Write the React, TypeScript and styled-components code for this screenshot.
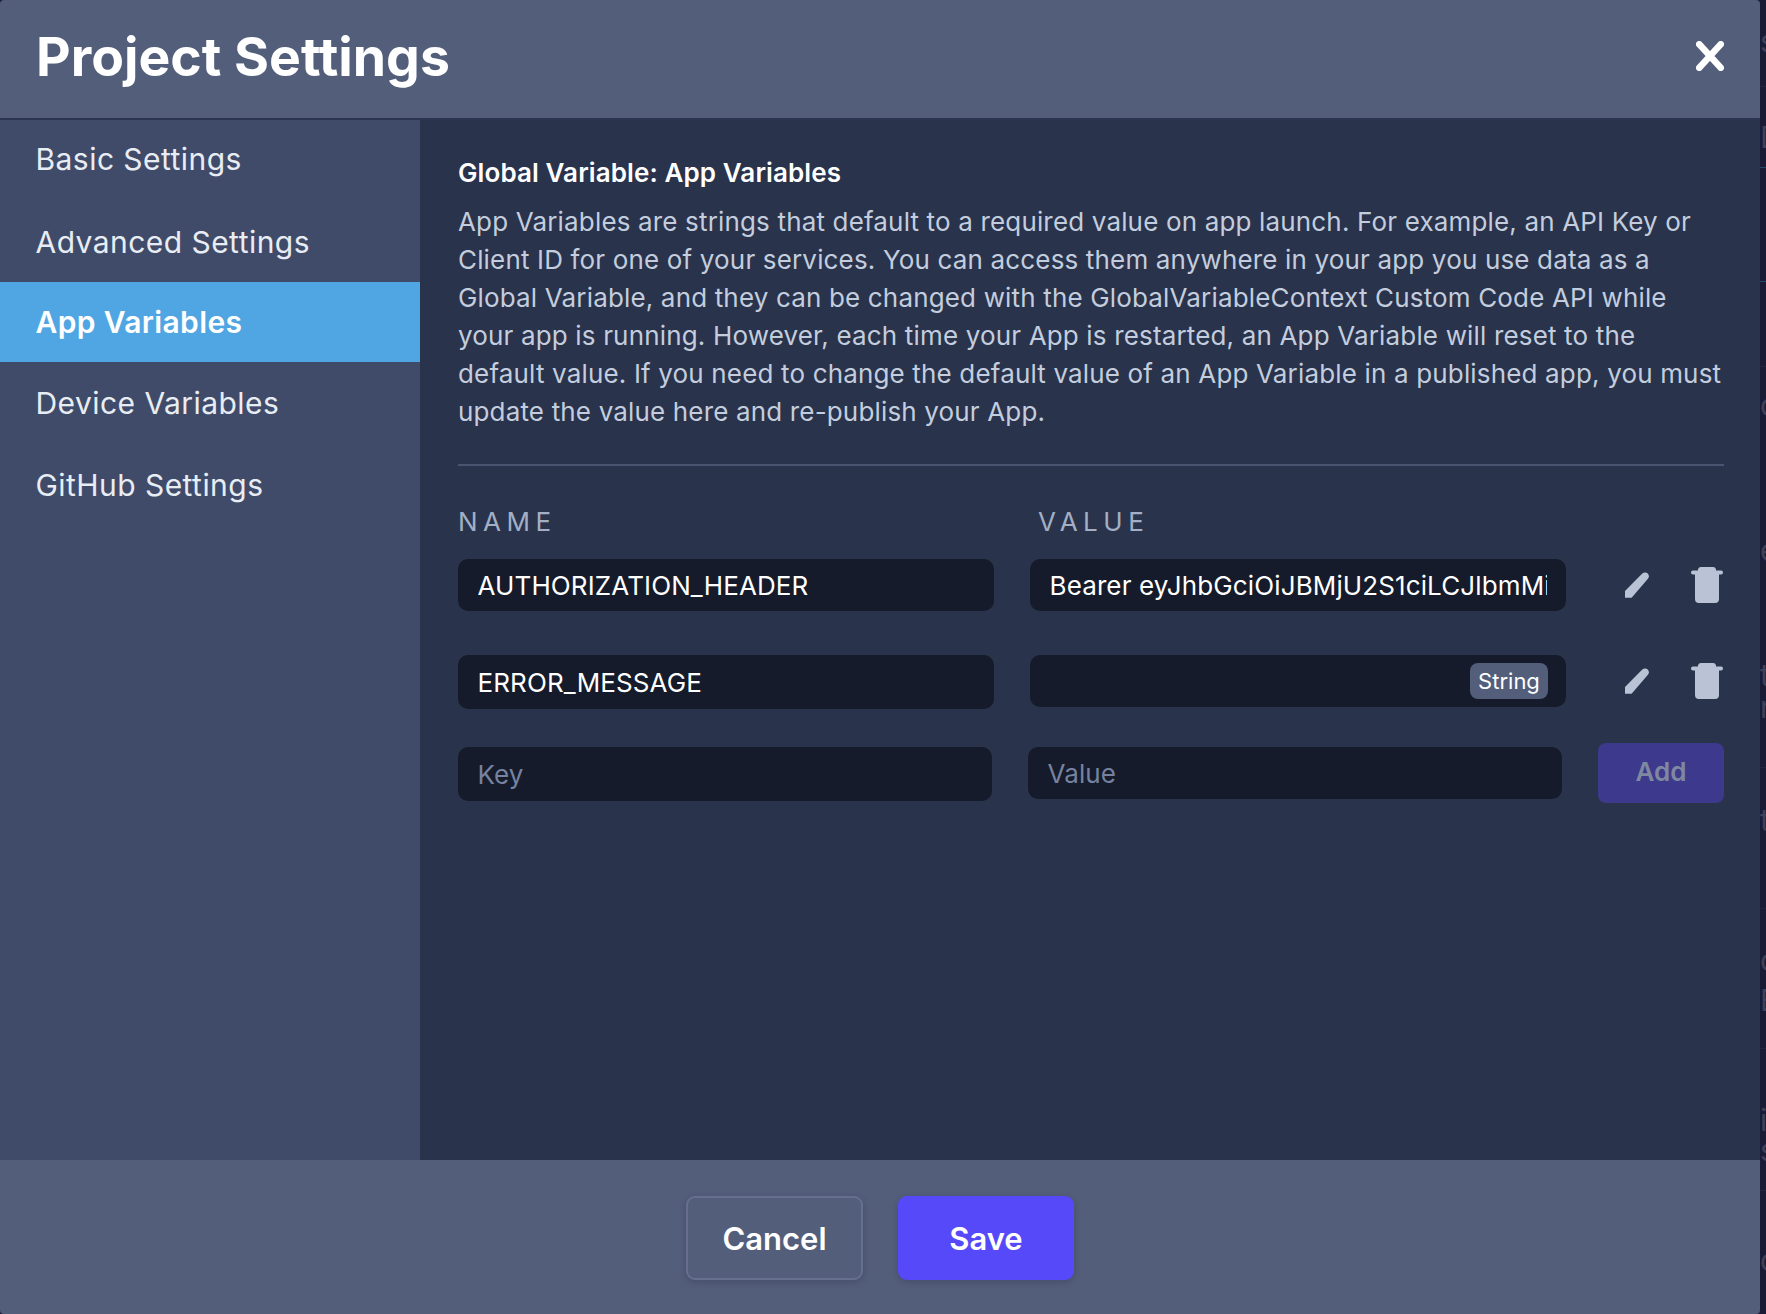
import styled, { createGlobalStyle } from 'styled-components';

const COLORS = {
  BACKDROP: '#1a1b35',
  HEADER: '#535e7b',
  SIDEBAR: '#404b69',
  MAIN: '#29334c',
  ACTIVE: '#4fa6e2',
  FIELD: '#151b2a',
  BODY_TEXT: '#c3cddd',
  MUTED: '#a3afc4',
  ICON: '#b9c3d5',
};

const GlobalStyle = createGlobalStyle`
  html, body {
    margin: 0;
    height: 100%;
    background: ${COLORS.BACKDROP};
    font-family: Inter, "Noto Sans", sans-serif;
    overflow: hidden;
  }
  * {
    box-sizing: border-box;
  }
`;

const Page = styled.div`
  position: relative;
  height: 1314px;
  width: 1766px;
  overflow: hidden;
`;

const Backdrop = styled.div`
  position: absolute;
  top: 0;
  bottom: 0;
  left: 1760px;
  width: 6px;
  overflow: hidden;
`;

const BackdropGlyph = styled.span<{ $y: number }>`
  position: absolute;
  left: 0;
  top: ${(p) => p.$y}px;
  font-size: 30px;
  line-height: 30px;
  color: #3f4158;
`;

const BackdropLine = styled.div<{ $y: number; $color: string }>`
  position: absolute;
  left: 0;
  right: 0;
  top: ${(p) => p.$y}px;
  height: 1px;
  background: ${(p) => p.$color};
`;

const Modal = styled.div`
  width: 1760px;
  height: 1314px;
  display: flex;
  flex-direction: column;
  border-radius: 4px;
  overflow: hidden;
`;

const Header = styled.header`
  height: 120px;
  flex-shrink: 0;
  display: flex;
  align-items: center;
  justify-content: space-between;
  padding: 0 36px 6px;
  background: ${COLORS.HEADER};
  border-bottom: 2px solid #2c3550;
`;

const Title = styled.h1`
  margin: 0;
  font-size: 53.5px;
  font-weight: 700;
  color: #fff;
`;

const Body = styled.div`
  flex: 1;
  display: flex;
  min-height: 0;
`;

const Sidebar = styled.nav`
  width: 420px;
  flex-shrink: 0;
  background: ${COLORS.SIDEBAR};
  display: flex;
  flex-direction: column;
`;

const NavItem = styled.div<{ $active?: boolean; $height: number }>`
  height: ${(p) => p.$height}px;
  display: flex;
  align-items: center;
  padding-left: 35.5px;
  font-size: 30px;
  letter-spacing: ${(p) => (p.$active ? 0.35 : 0.45)}px;
  font-weight: ${(p) => (p.$active ? 600 : 400)};
  color: ${(p) => (p.$active ? '#fff' : '#e8edf4')};
  background: ${(p) => (p.$active ? COLORS.ACTIVE : 'transparent')};

  &:first-child {
    padding-bottom: 3px;
  }
`;

const Main = styled.main`
  flex: 1;
  background: ${COLORS.MAIN};
  padding: 34px 36px 0 38px;
`;

const Heading = styled.div`
  font-size: 26px;
  line-height: 38px;
  font-weight: 600;
  letter-spacing: 0.1px;
  color: #fff;
`;

const Description = styled.p`
  margin: 11px 0 0;
  font-size: 26px;
  line-height: 38px;
  color: ${COLORS.BODY_TEXT};
  letter-spacing: 0.16px;
`;

const Divider = styled.hr`
  margin: 33px 0 0;
  border: 0;
  height: 2px;
  background: #4a5471;
`;

const ColumnLabels = styled.div`
  display: flex;
  margin-top: 35px;
  height: 40px;
  align-items: center;
`;

const ColumnLabel = styled.div<{ $width: number }>`
  width: ${(p) => p.$width}px;
  font-size: 26px;
  letter-spacing: 5.5px;
  color: ${COLORS.MUTED};
`;

const Row = styled.div<{ $top: number }>`
  display: flex;
  align-items: flex-start;
  margin-top: ${(p) => p.$top}px;
`;

const Field = styled.input<{ $width: number; $height: number; $offset?: number; $gap?: number }>`
  display: block;
  width: ${(p) => p.$width}px;
  height: ${(p) => p.$height}px;
  margin-top: ${(p) => p.$offset ?? 0}px;
  margin-right: ${(p) => p.$gap ?? 0}px;
  padding: 0 19.5px;
  border: 0;
  border-radius: 10px;
  outline: none;
  background: ${COLORS.FIELD};
  color: #fff;
  font-family: inherit;
  font-size: 26px;
  letter-spacing: 0.12px;
  flex-shrink: 0;

  &::placeholder {
    color: #76829f;
    opacity: 1;
  }
`;

const FieldWrap = styled.div`
  position: relative;
  flex-shrink: 0;
`;

const Badge = styled.span`
  position: absolute;
  top: 8px;
  right: 18px;
  height: 36px;
  width: 78px;
  display: flex;
  align-items: center;
  justify-content: center;
  border-radius: 8px;
  background: ${COLORS.HEADER};
  color: #fff;
  font-size: 22px;
`;

const Actions = styled.div`
  height: 52px;
  display: flex;
  align-items: center;
  margin-left: 59px;
  gap: 42px;
`;

const IconButton = styled.button`
  padding: 0;
  border: 0;
  background: none;
  display: flex;
`;

const AddButton = styled.button`
  width: 126px;
  height: 60px;
  padding: 0 0 3px;
  border: 0;
  border-radius: 8px;
  background: #3d398c;
  color: #7f88a1;
  font-family: inherit;
  font-size: 26px;
  font-weight: 600;
`;

const Footer = styled.footer`
  height: 154px;
  flex-shrink: 0;
  display: flex;
  justify-content: center;
  align-items: flex-start;
  gap: 35px;
  padding-top: 36px;
  background: ${COLORS.HEADER};
`;

const FooterButton = styled.button<{ $primary?: boolean }>`
  width: ${(p) => (p.$primary ? 176 : 177)}px;
  height: 84px;
  border-radius: 9px;
  border: ${(p) => (p.$primary ? '0' : '2px solid #666f8e')};
  background: ${(p) => (p.$primary ? '#5649fa' : 'transparent')};
  box-shadow: 0 2px 6px rgba(30, 36, 60, 0.25);
  color: #fff;
  font-family: inherit;
  font-size: 31px;
  font-weight: 600;
`;

const CloseIcon = () => (
  <svg width="28" height="30" viewBox="0 0 28 30" fill="none">
    <path d="M3.25 3.25 24.75 26.75M24.75 3.25 3.25 26.75" stroke="#fff" strokeWidth="6.5" strokeLinecap="round" />
  </svg>
);

const PencilIcon = () => (
  <svg width="24" height="26" viewBox="0 0 24.3 25.7">
    <path
      d="M0 19 17.5 1.2Q19 0 21 .2 24 1 24.2 4 24.2 5.2 23.2 6.5L6.7 25.7H0Z"
      fill={COLORS.ICON}
    />
  </svg>
);

const TrashIcon = () => (
  <svg width="32" height="36" viewBox="0 0 32 36">
    <path
      d="M10 0h12a3 3 0 0 1 3 3.5h5a2 2 0 0 1 0 4H28V32a4 4 0 0 1-4 4H8a4 4 0 0 1-4-4V7.5H2a2 2 0 0 1 0-4h5A3 3 0 0 1 10 0z"
      fill={COLORS.ICON}
    />
  </svg>
);

const NAV_ITEMS = [
  { title: 'Basic Settings', height: 81 },
  { title: 'Advanced Settings', height: 81 },
  { title: 'App Variables', height: 80, active: true },
  { title: 'Device Variables', height: 82 },
  { title: 'GitHub Settings', height: 82 },
];

const BACKDROP_GLYPHS = [
  { y: 26, ch: 's' },
  { y: 122, ch: 'D' },
  { y: 390, ch: 'o' },
  { y: 535, ch: 'e' },
  { y: 660, ch: 't' },
  { y: 692, ch: 'n' },
  { y: 805, ch: 't' },
  { y: 945, ch: 'o' },
  { y: 985, ch: 'E' },
  { y: 1105, ch: 'i' },
  { y: 1135, ch: 's' },
  { y: 1245, ch: 'o' },
];

const BACKDROP_LINES = [
  { y: 86, color: '#23253f' },
  { y: 167, color: '#24486a' },
  { y: 281, color: '#24486a' },
  { y: 366, color: '#23253f' },
  { y: 767, color: '#23253f' },
  { y: 908, color: '#23253f' },
  { y: 1048, color: '#23253f' },
  { y: 1190, color: '#23253f' },
];

const RowActions = () => (
  <Actions>
    <IconButton><PencilIcon /></IconButton>
    <IconButton><TrashIcon /></IconButton>
  </Actions>
);

const App = () => {
  return (
    <Page>
      <GlobalStyle />
      <Backdrop>
        {BACKDROP_LINES.map(({ y, color }) => (
          <BackdropLine key={`line-${y}`} $y={y} $color={color} />
        ))}
        {BACKDROP_GLYPHS.map(({ y, ch }) => (
          <BackdropGlyph key={`glyph-${y}`} $y={y}>{ch}</BackdropGlyph>
        ))}
      </Backdrop>
      <Modal>
        <Header>
          <Title>Project Settings</Title>
          <CloseIcon />
        </Header>
        <Body>
          <Sidebar>
            {NAV_ITEMS.map(({ title, height, active }) => (
              <NavItem key={title} $height={height} $active={active}>{title}</NavItem>
            ))}
          </Sidebar>
          <Main>
            <Heading>Global Variable: App Variables</Heading>
            <Description>
              App Variables are strings that default to a required value on app launch. For example, an API Key or
              Client ID for one of your services. You can access them anywhere in your app you use data as a
              Global Variable, and they can be changed with the GlobalVariableContext Custom Code API while
              your app is running. However, each time your App is restarted, an App Variable will reset to the
              default value. If you need to change the default value of an App Variable in a published app, you must
              update the value here and re-publish your App.
            </Description>
            <Divider />
            <ColumnLabels>
              <ColumnLabel $width={580}>NAME</ColumnLabel>
              <ColumnLabel $width={300}>VALUE</ColumnLabel>
            </ColumnLabels>
            <Row $top={18}>
              <Field $width={536} $height={52} $gap={36} readOnly value="AUTHORIZATION_HEADER" />
              <Field $width={536} $height={52} readOnly value="Bearer eyJhbGciOiJBMjU2S1ciLCJlbmMiOiJBMTI4Q0JDLUhTMjU2In0" />
              <RowActions />
            </Row>
            <Row $top={44}>
              <Field $width={536} $height={54} $gap={36} readOnly value="ERROR_MESSAGE" />
              <FieldWrap>
                <Field $width={536} $height={52} readOnly value="" />
                <Badge>String</Badge>
              </FieldWrap>
              <RowActions />
            </Row>
            <Row $top={34}>
              <Field $width={534} $height={54} $offset={4} $gap={36} placeholder="Key" readOnly />
              <Field $width={534} $height={52} $offset={4} $gap={36} placeholder="Value" readOnly />
              <AddButton>Add</AddButton>
            </Row>
          </Main>
        </Body>
        <Footer>
          <FooterButton>Cancel</FooterButton>
          <FooterButton $primary>Save</FooterButton>
        </Footer>
      </Modal>
    </Page>
  );
};

export default App;
